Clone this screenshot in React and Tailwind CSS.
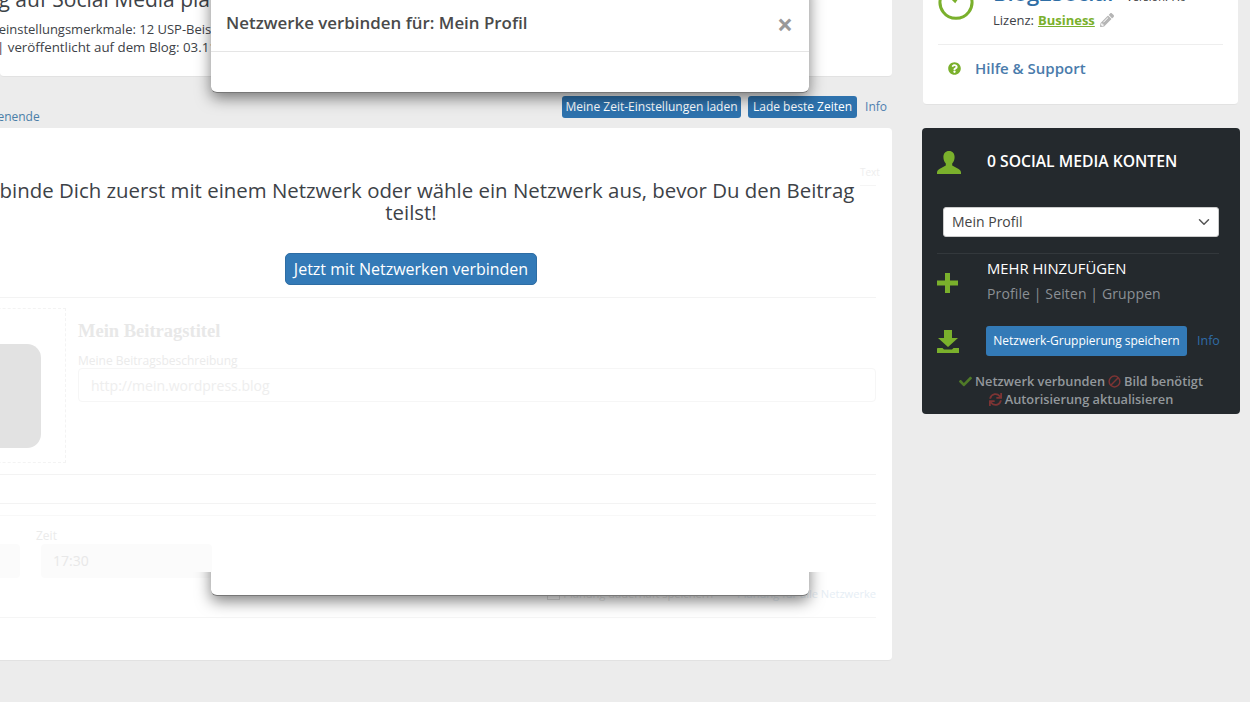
import { FaCheck, FaSync, FaPencilAlt, FaQuestionCircle } from 'react-icons/fa'
import { LuChevronDown } from 'react-icons/lu'

const UserIcon = () => (
    <svg viewBox="0 0 24 23" className="w-6 h-[23px] fill-[#7ab02c]">
        <path d="M12 0c3.6 0 5.6 2.6 5.6 6 0 2.6-1 5-2.4 6.4v2.2l6.4 3.4c1.4.8 2.4 2 2.4 3.4V23H0v-1.6c0-1.4 1-2.6 2.4-3.4l6.4-3.4v-2.2C7.400 11 6.400 8.600 6.400 6 6.400 2.600 8.400 0 12 0z" />
    </svg>
)

const SaveIcon = () => (
    <svg viewBox="0 0 22 23" className="w-[22px] h-[23px] fill-[#7ab02c]">
        <path d="M7 0h8v8h6l-10 9L1 8h6z" />
        <path d="M1 18h4.500l1.500 1.500h8l1.500-1.500H22v5H0v-4c0-.6.400-1 1-1z" />
    </svg>
)

const PlusIcon = () => (
    <svg viewBox="0 0 21 20" className="w-[21px] h-5 fill-[#7ab02c]">
        <path d="M8 0h5v7.500h8v5h-8V20H8v-7.500H0v-5h8z" />
    </svg>
)

const BanIcon = () => (
    <svg viewBox="0 0 14 14" className="w-[13px] h-[13px] mx-[3px] fill-none stroke-[#7d3434] stroke-[1.6]">
        <circle cx="7" cy="7" r="5.800" />
        <path d="M3 11l8-8" />
    </svg>
)

const Modal = ({ children, className }) => (
    <div
        className={`absolute left-[211px] w-[598px] bg-white rounded-md border-b border-[#777] shadow-[0_5px_15px_rgba(0,0,0,0.5)] ${className}`}
    >
        {children}
    </div>
)

const TopCard = () => (
    <div className="h-[77px] bg-white rounded-b border-b border-[#e2e2e2] overflow-hidden text-[#3d4247] whitespace-nowrap">
        <div className="-mt-[16px] ml-[-60px] text-[21px] leading-[30px]">
            Beitrag auf Social Media planen
        </div>
        <div className="mt-[6px] text-[13px] leading-[18px] ml-[-40px]">
            Grundeinstellungsmerkmale: 12 USP-Beispiele für Dein Marketing
        </div>
        <div className="text-[13.3px] leading-[18px] ml-[-3px]">
            | veröffentlicht auf dem Blog: 03.11.2019
        </div>
    </div>
)

const FadedForm = () => (
    <div className="px-4">
        <div className="h-[170px] border-b border-[#f3f3f3] flex justify-end">
            <div className="w-4 h-[58px] border-b border-[#f5f5f5] text-[10px] leading-[88px] text-[#eeeeee]">
                Text
            </div>
        </div>
        <div className="flex gap-3 pt-[10px] h-[177px] border-b border-[#f3f3f3]">
            <div className="w-[154px] h-[155px] border border-dashed border-[#f3f3f3] pt-[35px] flex justify-center shrink-0">
                <div className="w-[104px] h-[104px] rounded-[14px] bg-[#e2e2e2]" />
            </div>
            <div className="flex-1">
                <div className="pt-[11px] text-[18.5px] leading-6 font-bold text-[#e8e8e8] font-['Liberation_Serif',serif]">
                    Mein Beitragstitel
                </div>
                <div className="mt-[11px] text-[12px] leading-[14px] text-[#ebebeb]">
                    Meine Beitragsbeschreibung
                </div>
                <div className="h-[34px] px-3 border border-[#f6f6f6] rounded text-[14px] leading-[34px] text-[#eeeeee]">
                    http://mein.wordpress.blog
                </div>
            </div>
        </div>
        <div className="h-[29px] border-b border-[#f3f3f3]" />
        <div className="h-[12px] border-b border-[#f8f8f8]" />
        <div className="flex items-end gap-[21px] h-[62px]">
            <div className="w-[108px] h-[34px] bg-[#fbfbfb] rounded shrink-0" />
            <div className="w-[171px] relative">
                <div className="absolute -top-[15px] -left-[5px] text-[12px] leading-[14px] text-[#ebebeb]">Zeit</div>
                <div className="h-[34px] px-3 bg-[#fbfbfb] rounded text-[14px] leading-[34px] text-[#e8e8e8]">
                    17:30
                </div>
            </div>
        </div>
        <div className="h-[40px] pt-[9px] border-b border-[#f5f5f5] flex justify-end items-start text-[11.1px] leading-[13px] text-[#e6eef5]">
            <span className="w-[13px] h-[13px] border border-[#e0e0e0]" />
            <span className="ml-[3px] text-[#e8e8e8] mr-6">Planung dauerhaft speichern</span>
            <span>Planung für alle Netzwerke</span>
        </div>
    </div>
)

const MainCard = () => (
    <div className="h-[533px] bg-white rounded border-b border-[#e2e2e2] relative overflow-hidden">
        <FadedForm />
        <div className="absolute top-[51px] left-[55px] w-[920px] text-center text-[#3d4247]">
            <p className="text-[20.4px] leading-[22px]">
                Verbinde Dich zuerst mit einem Netzwerk oder wähle ein Netzwerk aus, bevor Du den Beitrag
                <br />
                teilst!
            </p>
            <button className="mt-[30px] h-8 px-2 rounded-[5px] bg-[#337ab7] border border-[#2e6da4] text-white text-[16px]">
                Jetzt mit Netzwerken verbinden
            </button>
        </div>
    </div>
)

const ProfileCard = () => (
    <div className="h-[105px] w-[315px] bg-white rounded-b border-b border-[#e2e2e2] px-[15px] overflow-hidden">
        <div className="h-[45px] border-b border-[#eeeeee] flex">
            <div className="w-[55px] shrink-0 -mt-[16px]">
                <svg viewBox="0 0 36 36" className="w-9 h-9 fill-none stroke-[#7ab02c] stroke-[3]">
                    <path d="M24 3.500a16 16 0 1 1-12 0" />
                    <path d="M12 12l5 5 6-9" />
                </svg>
            </div>
            <div>
                <div className="-mt-[24px] flex items-baseline gap-[13px] whitespace-nowrap">
                    <span className="text-[22px] leading-[32px] font-semibold text-[#2f6ea5]">Blog2Social</span>
                    <span className="text-[11px] text-[#333]">Version: 7.0</span>
                </div>
                <div className="mt-[3px] flex items-center text-[13px] leading-[18px] text-[#3d4247]">
                    Lizenz:
                    <span className="ml-1 font-bold text-[#7ab02c] underline">Business</span>
                    <FaPencilAlt className="ml-[5px] text-[14px] text-[#b5b5b5]" />
                </div>
            </div>
        </div>
        <div className="flex items-center pl-[10px] pt-[12px] text-[15px] leading-[22px] font-semibold text-[#4a7bab]">
            <FaQuestionCircle className="text-[13px] text-[#7ab02c] mr-[14px]" />
            Hilfe &amp; Support
        </div>
    </div>
)

const NetworkCard = () => (
    <div className="mt-[23px] h-[286px] w-[318px] -ml-px bg-[#24292d] rounded px-[21px]">
        <div className="h-[79px] flex items-start pt-[23px] -ml-[6px]">
            <div className="w-[50px] shrink-0">
                <UserIcon />
            </div>
            <h2 className="text-[15.7px] leading-5 font-semibold text-white">0 SOCIAL MEDIA KONTEN</h2>
        </div>
        <div className="h-[30px] pb-px bg-white rounded-[3px] border border-[#ccc] px-2 flex items-center justify-between text-[14px] text-[#444]">
            Mein Profil
            <LuChevronDown className="text-[18px] -mr-[3px] text-[#555]" />
        </div>
        <div className="mt-4 border-t border-[#33383c] flex -ml-[6px] h-[72px]">
            <div className="w-[50px] shrink-0 pt-[19px]">
                <PlusIcon />
            </div>
            <div className="pt-1 text-[14px]">
                <div className="text-[14.8px] leading-5 text-white">MEHR HINZUFÜGEN</div>
                <div className="mt-[6px] leading-5 tracking-[0.12px] text-[#8b9095]">Profile | Seiten | Gruppen</div>
            </div>
        </div>
        <div className="mt-px flex items-center -ml-[6px]">
            <div className="w-[49px] shrink-0">
                <SaveIcon />
            </div>
            <button className="shrink-0 w-[201px] h-[30px] bg-[#337ab7] rounded-[3px] text-white text-[12px] font-medium">
                Netzwerk-Gruppierung speichern
            </button>
            <span className="ml-[10px] text-[12.5px] text-[#2f6ca8]">Info</span>
        </div>
        <div className="mt-4 -mx-[10px] text-center text-[12.8px] leading-[18px] font-semibold text-[#93989c]">
            <div className="flex items-center justify-center">
                <FaCheck className="text-[13px] text-[#4f7a28] mr-[3px]" />
                Netzwerk verbunden
                <BanIcon />
                Bild benötigt
            </div>
            <div className="flex items-center justify-center">
                <FaSync className="text-[13px] text-[#7d3434] mr-[3px]" />
                Autorisierung aktualisieren
            </div>
        </div>
    </div>
)

export default function App() {
    return (
        <div className="relative w-[1250px] h-[702px] overflow-hidden bg-[#ececec] font-['Open_Sans',sans-serif] flex">
            <div className="w-[892px] shrink-0">
                <TopCard />
                <div className="h-[51px] flex items-start justify-between">
                    <span className="mt-[32px] text-[12px] leading-4 text-[#4a7ea8] whitespace-nowrap -ml-[34px]">
                        Wochenende
                    </span>
                    <div className="flex items-center pt-[19px] pr-[5px]">
                        <button className="h-[22px] w-[179px] bg-[#2e72ad] rounded-[3px] text-white text-[12px]">
                            Meine Zeit-Einstellungen laden
                        </button>
                        <button className="ml-[7px] h-[22px] w-[109px] bg-[#2e72ad] rounded-[3px] text-white text-[12px]">
                            Lade beste Zeiten
                        </button>
                        <span className="ml-2 text-[12px] text-[#4f7fb0]">Info</span>
                    </div>
                </div>
                <div className="-ml-[104px]">
                    <MainCard />
                </div>
            </div>
            <div className="ml-[31px]">
                <ProfileCard />
                <NetworkCard />
            </div>

            <Modal className="-top-[20px] h-[113px]">
                <div className="h-[72px] pt-[14px] pl-[15px] pr-[16px] border-b border-[#e5e5e5] flex items-center justify-between">
                    <h3 className="text-[16.9px] font-semibold text-[#4a4a4a]">Netzwerke verbinden für: Mein Profil</h3>
                    <span className="pt-[2px] text-[28px] font-bold leading-none text-[#999]">×</span>
                </div>
            </Modal>
            <div className="absolute left-0 top-[572px] w-[1000px] h-[60px] overflow-hidden">
                <Modal className="-top-[40px] h-[64px]" />
            </div>
        </div>
    )
}
